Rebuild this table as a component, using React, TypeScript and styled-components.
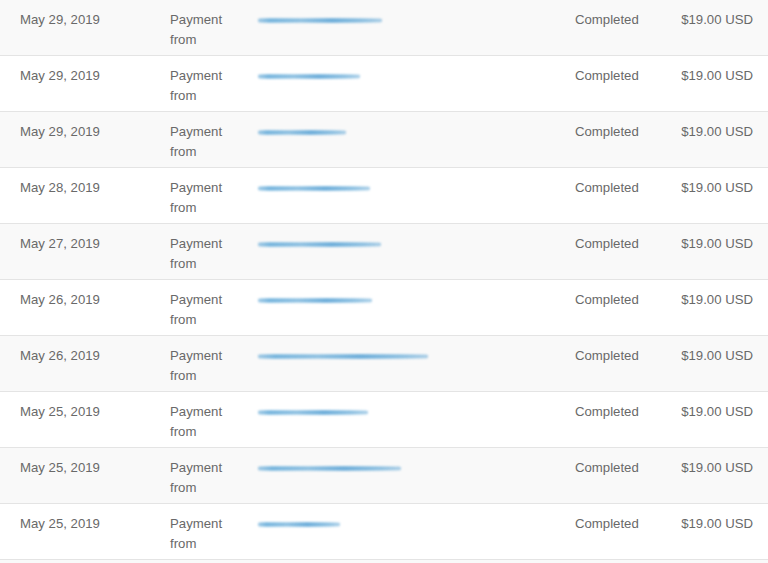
import React from "react";
import styled, { createGlobalStyle } from "styled-components";

const Global = createGlobalStyle`
  html, body { margin: 0; padding: 0; background: #f9f9f9; }
  body { font-family: "Liberation Sans", Arial, Helvetica, sans-serif; }
`;

const Table = styled.div`
  display: flex;
  flex-direction: column;
  width: 768px;
  background: #f9f9f9;
  min-height: 563px;
`;

const Row = styled.div<{ $alt: boolean }>`
  display: grid;
  grid-template-columns: 150px 88px 1fr 106px 72px;
  padding: 10px 15px 5px 20px;
  height: 56px;
  box-sizing: border-box;
  background: ${(p) => (p.$alt ? "#ffffff" : "#f9f9f9")};
  border-bottom: 1px solid #e4e4e4;
  font-size: 13.2px;
  line-height: 20px;
  color: #696969;
`;

const Cell = styled.div<{ $right?: boolean }>`
  text-align: ${(p) => (p.$right ? "right" : "left")};
  white-space: nowrap;
`;

const TypeCell = styled.div`
  width: 60px;
`;

const NameCell = styled.div`
  position: relative;
  height: 20px;
`;

const Redacted = styled.span`
  position: absolute;
  left: 0;
  top: 8px;
  height: 5px;
  border-radius: 2px;
  background:
    linear-gradient(
      180deg,
      rgba(255, 255, 255, 0) 0%,
      rgba(70, 150, 205, 0.55) 45%,
      rgba(255, 255, 255, 0) 100%
    ),
    linear-gradient(
      90deg,
      rgba(150, 200, 230, 0.3) 0%,
      rgba(120, 185, 225, 0.75) 10%,
      rgba(150, 200, 230, 0.6) 35%,
      rgba(110, 175, 220, 0.8) 60%,
      rgba(150, 200, 230, 0.6) 85%,
      rgba(170, 210, 235, 0.15) 100%
    );
  filter: blur(0.8px);
`;

const rows = [
  { date: "May 29, 2019", w: 124 },
  { date: "May 29, 2019", w: 102 },
  { date: "May 29, 2019", w: 88 },
  { date: "May 28, 2019", w: 112 },
  { date: "May 27, 2019", w: 123 },
  { date: "May 26, 2019", w: 114 },
  { date: "May 26, 2019", w: 170 },
  { date: "May 25, 2019", w: 110 },
  { date: "May 25, 2019", w: 143 },
  { date: "May 25, 2019", w: 82 },
];

export default function App() {
  return (
    <>
      <Global />
      <Table>
        {rows.map((r, i) => (
          <Row key={i} $alt={i % 2 === 1}>
            <Cell>{r.date}</Cell>
            <TypeCell>Payment from</TypeCell>
            <NameCell>
              <Redacted style={{ width: r.w }} />
            </NameCell>
            <Cell>Completed</Cell>
            <Cell $right>$19.00 USD</Cell>
          </Row>
        ))}
      </Table>
    </>
  );
}
